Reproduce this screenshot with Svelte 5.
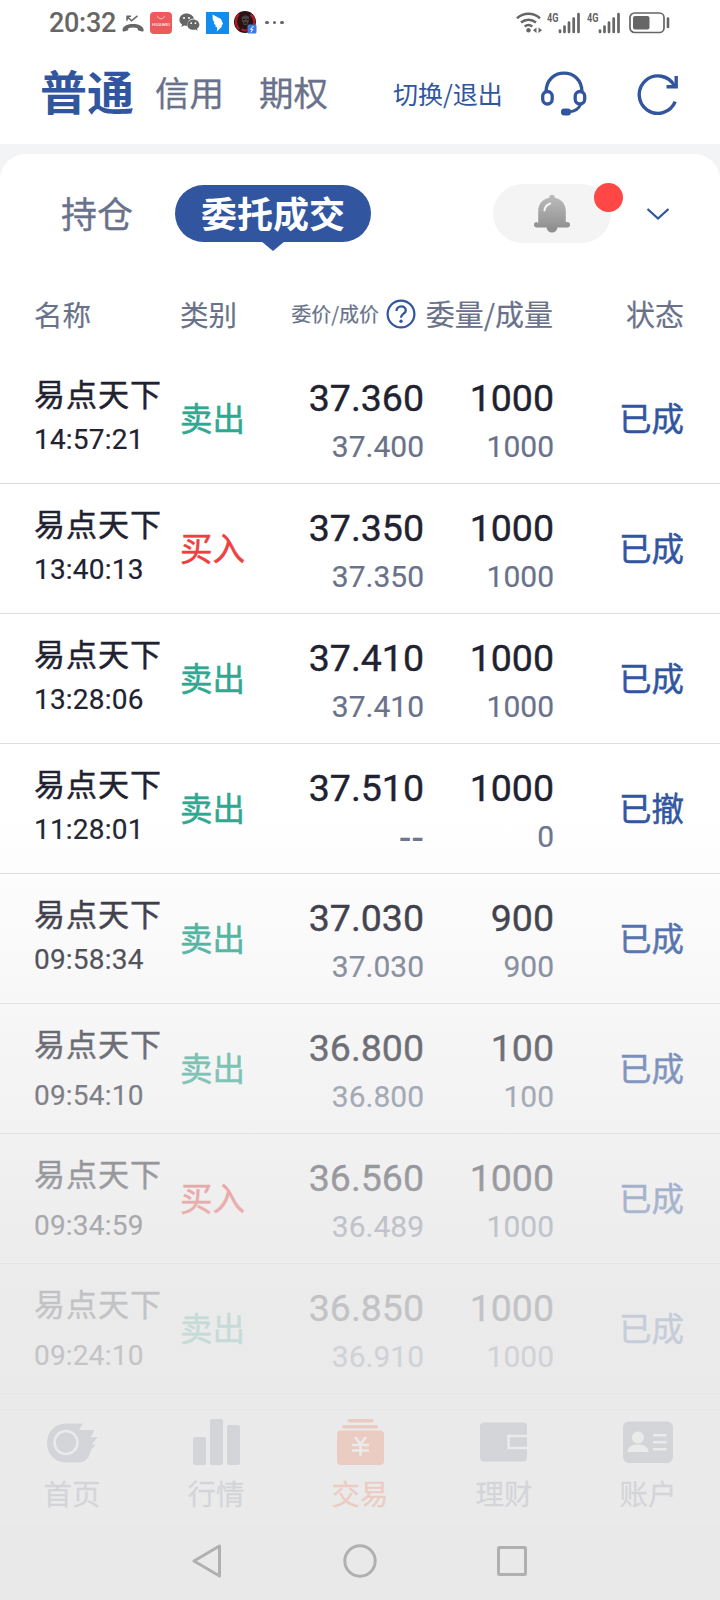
<script>
	const orders = [
		{ name: '易点天下', time: '14:57:21', side: 'sell', price: '37.360', deal: '37.400', qty: '1000', dealQty: '1000', status: '已成' },
		{ name: '易点天下', time: '13:40:13', side: 'buy', price: '37.350', deal: '37.350', qty: '1000', dealQty: '1000', status: '已成' },
		{ name: '易点天下', time: '13:28:06', side: 'sell', price: '37.410', deal: '37.410', qty: '1000', dealQty: '1000', status: '已成' },
		{ name: '易点天下', time: '11:28:01', side: 'sell', price: '37.510', deal: '--', qty: '1000', dealQty: '0', status: '已撤' },
		{ name: '易点天下', time: '09:58:34', side: 'sell', price: '37.030', deal: '37.030', qty: '900', dealQty: '900', status: '已成' },
		{ name: '易点天下', time: '09:54:10', side: 'sell', price: '36.800', deal: '36.800', qty: '100', dealQty: '100', status: '已成', loose: true },
		{ name: '易点天下', time: '09:34:59', side: 'buy', price: '36.560', deal: '36.489', qty: '1000', dealQty: '1000', status: '已成', loose: true },
		{ name: '易点天下', time: '09:24:10', side: 'sell', price: '36.850', deal: '36.910', qty: '1000', dealQty: '1000', status: '已成', loose: true }
	];

	const sides = { sell: '卖出', buy: '买入' };
	const tabs = [
		{ value: 'home', label: '首页' },
		{ value: 'market', label: '行情' },
		{ value: 'trade', label: '交易' },
		{ value: 'wealth', label: '理财' },
		{ value: 'account', label: '账户' }
	];

	let activeTab = 'trade';
	const handleClick = (value) => () => (activeTab = value);
</script>

<div class="phone">
	<div class="statusbar">
		<span class="clock">20:32</span>
		<svg class="missed" width="22" height="18" viewBox="0 0 22 18">
			<path d="M4.500 1.200h4.500M5 1.200v4.500M5 1.200l4.500 4.600 6-5" fill="none" stroke="#666" stroke-width="1.500" />
			<path d="M.6 14.500C1 10.800 6 9 11 9s10 1.800 10.600 5.500c.2 1.600-.3 2.300-1.600 2l-3.400-.9c-1-.3-1-1-1-2.400-2.800-1.100-6.400-1.100-9.200 0 0 1.400 0 2.100-1 2.400l-3.400.9c-1.200.3-1.600-.4-1.400-2z" fill="#666" />
		</svg>
		<svg class="huawei" width="22" height="22" viewBox="0 0 22 22">
			<rect width="22" height="22" rx="4" fill="#ee5a5c" />
			<path d="M7.500 3.800c.5 4 6.500 4 7 0" fill="none" stroke="#fbc4c2" stroke-width="1" />
			<text x="11" y="14" text-anchor="middle" textLength="18" lengthAdjust="spacingAndGlyphs" font-size="4.200" font-weight="700" fill="#fbd5d4">HUAWEI</text>
		</svg>
		<svg class="wechat" width="21" height="19" viewBox="0 0 21 19">
			<path d="M7.500.5C3.500.5.4 3.200.4 6.700c0 2 1 3.700 2.700 4.800l-.8 2.500 2.800-1.500c1 .3 2 .4 3.200.3C8 8.500 11 5.600 15 5.600 14.300 2.700 11.200.5 7.500.5z" fill="#666" />
			<path d="M14.300 6.500c-3.400 0-6 2.300-6 5.200s2.600 5.100 6 5.100c.8 0 1.500-.1 2.200-.3l2.100 1.200-.6-2c1.400-.9 2.400-2.300 2.400-4 0-2.900-2.700-5.200-6.100-5.200z" fill="#666" />
			<g fill="#fff"><circle cx="5" cy="4.900" r="1" /><circle cx="10" cy="4.900" r="1" /><circle cx="12.200" cy="10.200" r=".9" /><circle cx="16.400" cy="10.200" r=".9" /></g>
		</svg>
		<svg class="ding" width="23" height="22" viewBox="0 0 23 22">
			<rect width="23" height="22" fill="#118dee" />
			<path d="M6.500 2.500l8.500 4.500 2 4.700-1.700 2.600h1l-5.500 5.200.5-4-2.300-1.200 1-.5-2.400-2.600 1-.2-1.800-3.200z" fill="#fff" />
		</svg>
		<svg class="avatar" width="23" height="23" viewBox="0 0 23 23">
			<circle cx="11" cy="11" r="11" fill="#281414" />
			<path d="M5 3C1 7 1 14 5 18.500M16.500 3.300c3.500 3 4.500 7 3 10.500M7.500 18c2 2 4 1.600 5.500 1" fill="none" stroke="#b01c20" stroke-width="2.200" />
			<path d="M8 6c2-2 5-2 7 0v4l-2 4h-3l-2-4z" fill="#4b4040" />
			<path d="M9 8.500h2M12.500 8.500h2M10 12h3" stroke="#120a0a" stroke-width="1.200" />
			<rect x="13.500" y="13.500" width="9" height="9" rx="1.500" fill="#3d7be0" />
			<path d="M19.500 15l-3 3.400h2.300l-2 2.900" fill="none" stroke="#fff" stroke-width="1" />
		</svg>
		<span class="dots"><i></i><i></i><i></i></span>

		<div class="signals">
			<svg width="27" height="22" viewBox="0 0 27 22">
				<g fill="none" stroke="#666" stroke-width="2.500">
					<path d="M1 6.200c6.700-6 16.300-6 23 0M5 10.500c4.500-3.800 10.500-3.800 15 0M8.700 14.500c2.400-1.900 5.200-1.900 7.600 0" />
				</g>
				<circle cx="12.500" cy="18.300" r="2.200" fill="#666" />
				<path d="M17 18.200l3.500-2.700v5.400zM26 18.200l-3.500-2.700v5.400z" fill="#666" />
			</svg>
			{#each [1, 2] as sim}
				<svg class="sim" width="34" height="26" viewBox="0 -4 34 26">
					<text x="0" y="9.500" textLength="11.500" lengthAdjust="spacingAndGlyphs" font-size="12.500" font-weight="700" fill="#666">4G</text>
					<path d="M13 20v-1.500M17.500 20v-5.500M22 20V10.700M26.700 20V6.500M31.500 20V2" stroke="#666" stroke-width="2.700" stroke-linecap="round" />
				</svg>
			{/each}
			<svg class="battery" width="42" height="22" viewBox="0 0 42 22">
				<rect x="1" y="1" width="34" height="19.500" rx="4.500" fill="none" stroke="#666" stroke-width="1.700" />
				<rect x="4" y="4" width="16.500" height="13.500" rx="2" fill="#666" />
				<path d="M39 6.500v8.500" stroke="#666" stroke-width="2.600" stroke-linecap="round" />
			</svg>
		</div>
	</div>

	<header>
		<span class="main">普通</span>
		<span class="mode">信用</span>
		<span class="mode">期权</span>
		<span class="switch">切换/退出</span>
		<svg class="headset" width="46" height="46" viewBox="0 0 46 46" fill="none" stroke="#31569f">
			<path d="M5 20.500C5.500 9 13 2.200 23 2.200S40.500 9 41 20.500" stroke-width="3.300" />
			<rect x="1.700" y="20.500" width="9.500" height="12.500" rx="4.700" stroke-width="3.300" />
			<rect x="34.200" y="20.500" width="9.500" height="12.500" rx="4.700" stroke-width="3.300" />
			<path d="M40 32.500c-2 5.500-6 8-12 8.300" stroke-width="2.800" />
			<rect x="20" y="37.500" width="10" height="7" rx="3.200" fill="#31569f" stroke="none" />
		</svg>
		<svg class="refresh" width="42" height="44" viewBox="0 0 42 44" fill="none" stroke="#31569f" stroke-width="3.400">
			<path d="M38.200 29.700A18.700 18.700 0 1 1 37.500 14" />
			<path d="M39.200 4v10.800H29.500" />
		</svg>
	</header>

	<main>
		<div class="switcher">
			<span class="hold">持仓</span>
			<span class="pill">委托成交</span>
			<span class="bell">
				<svg width="36" height="40" viewBox="0 0 36 40">
					<defs>
						<linearGradient id="metal" x1="0" y1="0" x2="0" y2="1">
							<stop offset="0" stop-color="#b9b9b9" />
							<stop offset="1" stop-color="#929292" />
						</linearGradient>
					</defs>
					<circle cx="18" cy="3.500" r="2.800" fill="#bbb" />
					<circle cx="18" cy="33" r="5.500" fill="#8f8f8f" />
					<path d="M4.200 29V17.500C4.200 9 10 3.600 18 3.600S31.800 9 31.800 17.500V28h1.500a2.700 2.700 0 0 1 0 5.400H2.700a2.700 2.700 0 0 1 0-5.400z" fill="url(#metal)" />
					<path d="M10.500 16.500c.4-3.500 2.500-6 5.700-7" fill="none" stroke="#f5f5f5" stroke-width="2" stroke-linecap="round" />
				</svg>
			</span>
			<svg class="chevron" width="24" height="14" viewBox="0 0 24 14">
				<path d="M1.500 2l10.500 9.500L22.500 2" fill="none" stroke="#31569f" stroke-width="2.300" />
			</svg>
		</div>

		<div class="grid head">
			<span>名称</span>
			<span>类别</span>
			<span class="price-head">
				委价/成价
				<svg width="30" height="30" viewBox="0 0 30 30" fill="none" stroke="#31569f">
					<circle cx="15" cy="15" r="13.400" stroke-width="2.200" />
					<path d="M10.500 12c0-6 9.300-6 9.300-.6 0 3.300-4.800 3.300-4.800 7.300" stroke-width="2.300" />
					<circle cx="15" cy="22.200" r="1.700" fill="#31569f" stroke="none" />
				</svg>
			</span>
			<span class="right">委量/成量</span>
			<span class="right">状态</span>
		</div>

		{#each orders as order}
			<div class="grid row">
				<div class="stock" class:loose={order.loose}>
					<div class="name">{order.name}</div>
					<div class="time">{order.time}</div>
				</div>
				<div class="side {order.side}">{sides[order.side]}</div>
				<div class="nums">
					<div class="big">{order.price}</div>
					<div class="small" class:none={order.deal === '--'}>{order.deal}</div>
				</div>
				<div class="nums">
					<div class="big">{order.qty}</div>
					<div class="small">{order.dealQty}</div>
				</div>
				<div class="status">{order.status}</div>
			</div>
		{/each}
	</main>

	<nav>
		{#each tabs as tab}
			<button class={activeTab === tab.value ? 'active' : ''} on:click={handleClick(tab.value)}>
				<svg width="52" height="50" viewBox="0 0 52 50" fill="currentColor">
					{#if tab.value === 'home'}
						<path d="M20 6.500h17l-4 6.500h15.500L45 20h6.500L46 27.500h3.500L45 33c-1.500 8-6 12.500-13 12.500H20C9 45.500 1 37 1 26S9 6.500 20 6.500z" />
						<circle cx="20" cy="25.500" r="11.500" fill="none" stroke="#fff" stroke-width="2.500" />
					{:else if tab.value === 'market'}
						<rect x="3" y="20" width="13" height="28" rx="2" />
						<rect x="20" y="2" width="13" height="46" rx="2" />
						<rect x="37" y="8" width="13" height="40" rx="2" />
					{:else if tab.value === 'trade'}
						<rect x="13.500" y="2" width="26" height="3.600" rx="1.800" />
						<rect x="8" y="8" width="36" height="3.600" rx="1.800" />
						<rect x="3" y="13.500" width="47" height="34.500" rx="4" />
						<path d="M21 20l5.500 7 5.500-7M18 28h17M18 33.500h17M26.500 27v12" fill="none" stroke="#fff" stroke-width="2.500" />
					{:else if tab.value === 'wealth'}
						<rect x="2" y="5.500" width="47" height="39" rx="4" />
						<path d="M49.500 19H30.500v12h19" fill="none" stroke="#fff" stroke-width="2.500" />
					{:else}
						<rect x="1" y="4.500" width="50" height="41.500" rx="6" />
						<g fill="#fff">
							<circle cx="16" cy="20.500" r="6" />
							<path d="M5.500 35c0-5 4.500-7.500 10.500-7.500S26.500 30 26.500 35z" />
							<rect x="31" y="17" width="13.500" height="2.500" />
							<rect x="31" y="24" width="13.500" height="2.500" />
							<rect x="31" y="31" width="13.500" height="2.500" />
						</g>
					{/if}
				</svg>
				{tab.label}
			</button>
		{/each}
	</nav>

	<div class="fade"></div>

	<div class="system">
		<svg width="32" height="36" viewBox="0 0 32 36"><path d="M27.500 3v30L2 18z" /></svg>
		<svg width="36" height="36" viewBox="0 0 36 36"><circle cx="18" cy="18" r="15.200" /></svg>
		<svg width="32" height="36" viewBox="0 0 32 36"><rect x="2.500" y="4.500" width="27" height="27" rx="1" /></svg>
	</div>
</div>

<style>
	:global(body) {
		margin: 0;
		background: #fff;
	}
	.phone {
		position: relative;
		width: 720px;
		height: 1600px;
		overflow: hidden;
		display: flex;
		flex-direction: column;
		background: #f3f4f6;
		color: #1f2230;
		font-family: Roboto, 'Noto Sans CJK SC', sans-serif;
	}
	svg {
		display: block;
		flex: none;
	}

	/* status bar */
	.statusbar {
		display: flex;
		align-items: center;
		height: 45px;
		padding: 0 35px 0 49px;
		background: #fff;
		color: #666;
	}
	.clock {
		width: 73px;
		font-size: 27px;
		font-weight: 500;
		line-height: 46px;
		letter-spacing: -0.3px;
	}
	.missed {
		margin-top: 2px;
	}
	.huawei {
		margin-left: 6px;
	}
	.wechat,
	.ding {
		margin-left: 6px;
	}
	.wechat {
		margin-left: 7px;
	}
	.avatar {
		margin-left: 5px;
	}
	.dots {
		display: flex;
		gap: 4px;
		margin-left: 8px;
	}
	.dots i {
		width: 3.5px;
		height: 3.5px;
		border-radius: 50%;
		background: #666;
	}
	.signals {
		display: flex;
		align-items: flex-end;
		height: 22px;
		margin-left: auto;
		margin-right: 16px;
	}
	.sim {
		margin-left: 4px;
		margin-right: 2px;
	}
	.battery {
		margin-left: 6px;
		margin-right: -2px;
	}

	/* account switcher */
	header {
		display: flex;
		align-items: center;
		height: 99px;
		padding-left: 40px;
		background: #fff;
		font-family: 'Noto Sans CJK SC', sans-serif;
		color: #69728a;
		line-height: 96px;
	}
	.main {
		width: 115px;
		margin-bottom: 9px;
		font-size: 47px;
		font-weight: 700;
		color: #31569f;
	}
	.mode {
		width: 104px;
		font-size: 34.5px;
		margin-bottom: 7px;
		-webkit-text-stroke: 0.3px;
	}
	.switch {
		width: 148px;
		margin-left: 30px;
		margin-bottom: 3px;
		font-size: 25px;
		color: #31569f;
	}
	.headset {
		margin-bottom: 2px;
	}
	.refresh {
		margin-left: 50px;
		margin-bottom: 1px;
	}

	/* list card */
	main {
		flex: none;
		height: 1255px;
		margin-top: 10px;
		overflow: hidden;
		border-radius: 26px 26px 0 0;
		background: #fff;
		font-family: 'Noto Sans CJK SC', sans-serif;
	}
	.switcher {
		display: flex;
		align-items: flex-start;
		height: 86px;
		padding: 30px 50px 0 61px;
	}
	.hold {
		width: 114px;
		font-size: 36px;
		line-height: 57px;
		color: #69728a;
		-webkit-text-stroke: 0.3px;
	}
	.pill {
		position: relative;
		width: 196px;
		height: 57px;
		margin-top: 1px;
		border-radius: 29px;
		background: #31569f;
		color: #fff;
		font-size: 36px;
		font-weight: 700;
		line-height: 55px;
		text-align: center;
	}
	.pill::after {
		content: '';
		position: absolute;
		left: 86px;
		top: 56px;
		border: 12px solid transparent;
		border-top: 10px solid #31569f;
		border-bottom: 0;
	}
	.bell {
		position: relative;
		display: flex;
		align-items: center;
		justify-content: center;
		width: 118px;
		height: 59px;
		margin-left: 122px;
		border-radius: 30px;
		background: #f4f4f5;
	}
	.bell::after {
		content: '';
		position: absolute;
		right: -12px;
		top: -1px;
		width: 29px;
		height: 29px;
		border-radius: 50%;
		background: #ff4845;
	}
	.chevron {
		margin: 23px 0 0 35px;
	}
	.grid {
		display: grid;
		grid-template-columns: 146px 80px 163px 130px 131px;
		padding: 0 36px 0 34px;
		box-sizing: border-box;
	}
	.head {
		height: 84px;
		line-height: 87px;
		font-size: 28.5px;
		color: #69728a;
		-webkit-text-stroke: 0.2px;
	}
	.right {
		text-align: right;
		white-space: nowrap;
	}
	.head .right {
		font-size: 29px;
	}
	.price-head {
		display: flex;
		align-items: center;
		justify-content: flex-end;
		gap: 7px;
		padding-right: 7px;
		font-size: 20px;
		white-space: nowrap;
	}
	.price-head svg {
		margin-top: 1px;
	}
	.row {
		height: 130px;
		border-bottom: 1px solid #dedede;
	}
	.stock {
		display: flex;
		flex-direction: column;
		gap: 6px;
		padding-top: 17px;
	}
	.loose {
		gap: 12px;
	}
	.name {
		font-size: 31px;
		letter-spacing: 1px;
		line-height: 43px;
		white-space: nowrap;
		-webkit-text-stroke: 0.5px;
	}
	.time {
		font-family: Roboto, sans-serif;
		font-size: 28px;
		letter-spacing: 0.2px;
		line-height: 40px;
		-webkit-text-stroke: 0.2px;
	}
	.side,
	.status {
		font-size: 32.5px;
		line-height: 125px;
		-webkit-text-stroke: 0.5px;
	}
	.sell {
		color: #2ea890;
	}
	.buy {
		color: #ee4040;
	}
	.status {
		color: #31569f;
		text-align: right;
	}
	.nums {
		padding-top: 22px;
		font-family: Roboto, sans-serif;
		text-align: right;
	}
	.big {
		margin-right: -1px;
		font-size: 37.5px;
		line-height: 44px;
		-webkit-text-stroke: 0.4px;
	}
	.small {
		margin-top: 9px;
		margin-right: -1px;
		font-size: 30px;
		line-height: 36px;
		color: #69728a;
		-webkit-text-stroke: 0.2px;
	}
	.none {
		font-family: 'Liberation Sans', sans-serif;
		font-size: 38px;
	}

	/* bottom tabs */
	nav {
		display: flex;
		flex: none;
		height: 113px;
		border-top: 1px solid #dedede;
		background: #fff;
	}
	button {
		display: flex;
		flex: 1;
		flex-direction: column;
		align-items: center;
		padding: 7px 0 0;
		border: 0;
		background: none;
		font-family: 'Noto Sans CJK SC', sans-serif;
		font-size: 28.5px;
		line-height: 51px;
		color: #787e96;
		-webkit-text-stroke: 0.3px;
	}
	button.active {
		color: #ff4a10;
	}

	/* haze over the lower part of the list and the tabs */
	.fade {
		position: absolute;
		left: 0;
		right: 0;
		top: 815px;
		bottom: 0;
		pointer-events: none;
		background: linear-gradient(rgba(230, 230, 230, 0), rgba(230, 230, 230, 0.82) 485px, rgba(230, 230, 230, 0.83) 600px);
	}

	/* android navigation */
	.system {
		position: relative;
		display: flex;
		flex: 1;
		align-items: center;
		justify-content: center;
		gap: 118px;
		padding-bottom: 1px;
		background: #e9e9e9;
	}
	.system svg {
		fill: none;
		stroke: #b0b0b0;
		stroke-width: 3;
		stroke-linejoin: round;
	}
</style>
